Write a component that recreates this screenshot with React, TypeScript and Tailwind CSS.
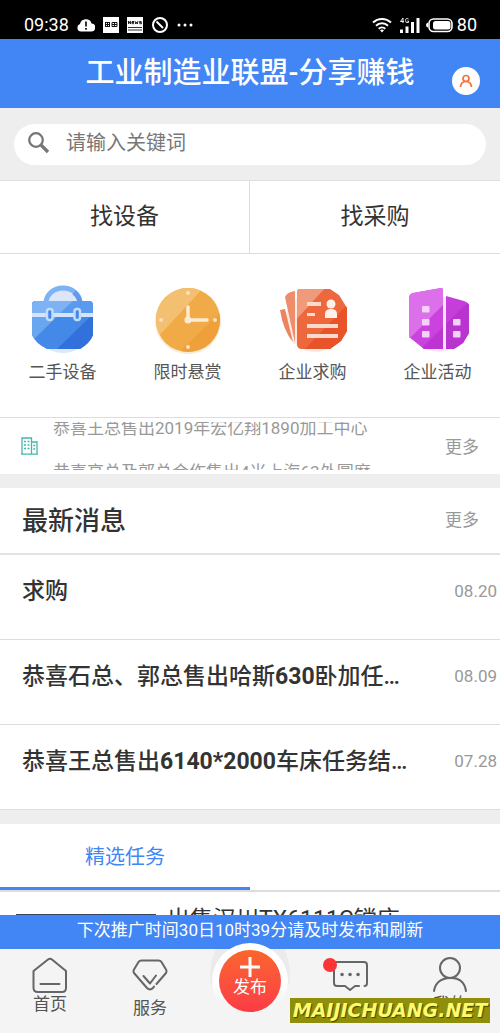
import type { ReactNode } from "react";

const news: { title: ReactNode; date: string }[] = [
  { title: "求购", date: "08.20" },
  { title: <>恭喜石总、郭总售出哈斯<b>630</b>卧加任务结束</>, date: "08.09" },
  { title: <>恭喜王总售出<b>6140*2000</b>车床任务结束了</>, date: "07.28" },
];

function StatusBar() {
  return (
    <div className="flex h-[39px] shrink-0 items-end justify-between bg-black pr-[23px] pb-[3px] pl-6 text-white">
      <div className="flex items-center gap-2">
        <span className="text-[18px] leading-[22px]">09:38</span>
        <svg width="18" height="14" viewBox="0 0 18 14">
          <path d="M4 13.500a3.800 3.800 0 0 1-1-7.400A6 6 0 0 1 14.600 5.500 4 4 0 0 1 14 13.500z" fill="#fff" />
          <path d="M9 3.500v5M9 10v1.700" stroke="#000" strokeWidth="1.600" />
        </svg>
        <svg width="16" height="16" viewBox="0 0 16 16">
          <path d="M0 0h16v16H0z" fill="#fff" />
          <path d="M2 5.500h5M2.500 5v5M2 9.500h5M6.500 5v5M4.500 5v5M2 7.500h5M9 5.500h5v4H9zM9 7.500h5M11.500 5v5" fill="none" stroke="#111" />
        </svg>
        <svg width="16" height="16" viewBox="0 0 16 16">
          <path d="M0 0h16v16H0z" fill="#fff" />
          <path d="M1.500 7V4l2 3V4M7 4.500H5v2.200h2M5 5.500h2M8 4l.7 3 .8-2 .8 2 .7-3M14.500 4.500h-2v1h2v1.200h-2.200" fill="none" stroke="#111" strokeWidth=".9" />
          <path d="M1 10.500h14M1 13h14" stroke="#333" />
        </svg>
        <svg width="18" height="18" viewBox="0 0 18 18" fill="none" stroke="#fff" strokeWidth="2">
          <circle cx="9" cy="9" r="7" />
          <path d="m5.500 5.500 6.500 6.500" />
        </svg>
        <svg width="16" height="16" viewBox="0 0 16 16" fill="#fff">
          <circle cx="2" cy="8" r="1.500" /><circle cx="8" cy="8" r="1.500" /><circle cx="14" cy="8" r="1.500" />
        </svg>
      </div>
      <div className="flex items-center">
        <svg className="mr-2" width="20" height="16" viewBox="0 0 20 16" fill="none" stroke="#fff" strokeWidth="2">
          <path d="M1 5.500a13 13 0 0 1 18 0M4 8.700a8.500 8.500 0 0 1 12 0M6.700 11.700a4.800 4.800 0 0 1 6.600 0" />
          <path d="m10 15.500-2-2.200q2-1.500 4 0z" fill="#fff" stroke="none" />
        </svg>
        <svg className="mr-[6px]" width="20" height="16" viewBox="0 0 20 16">
          <path d="M0 12.500h3V16H0zM5.500 9.500h3V16h-3zM11 5h3v11h-3zM16.500 1h3v15h-3z" fill="#fff" />
          <path d="M3 6V1L.5 4.500H4M8.500 2Q5.500.5 5.500 3.500T8.500 5.500V4H7.300" fill="none" stroke="#fff" strokeWidth=".9" />
        </svg>
        <svg className="mr-1" width="27" height="16" viewBox="0 0 27 16">
          <rect x="3" y="2" width="23" height="12.500" rx="4.500" fill="none" stroke="#fff" strokeWidth="1.600" />
          <rect x="7" y="4" width="17.500" height="8.500" rx="2.500" fill="#fff" />
          <path d="M2 5.500v5Q0 10 0 8t2-2.500" fill="#fff" />
        </svg>
        <span className="text-[18px] leading-[22px]">80</span>
      </div>
    </div>
  );
}

function Briefcase() {
  return (
    <svg width="72" height="72" viewBox="0 0 72 72">
      <defs>
        <clipPath id="bag"><path d="M5 20q0-4 4-4h53q4 0 4 4v30q-3 8-13 14H20Q9 59 5 50z" /></clipPath>
      </defs>
      <circle cx="36" cy="38" r="30" fill="#dce8fb" />
      <path d="M19 18a17 15 0 0 1 34 0" fill="#dce6f8" stroke="#7db2f4" strokeWidth="5" />
      <path d="M47 7.500A17 15 0 0 1 53 18" stroke="#6199ee" strokeWidth="5" fill="none" />
      <g clipPath="url(#bag)">
        <path d="M4 16h63v50H4z" fill="#4489e8" />
        <path d="M4 16h42L4 57z" fill="#69a6f0" />
        <path d="M67 28v38H28z" fill="#3270dc" />
        <path d="M4 16h63v12H4z" fill="#599aee" /><path d="M4 16h42L33 28H4z" fill="#7db2f4" />
        <path d="M4 28h63v4H4z" fill="#d4e5fb" />
      </g>
      <rect x="20" y="24" width="5.500" height="11" rx="2.500" fill="#4187e8" stroke="#c3dcfa" strokeWidth="2.500" />
      <rect x="47.500" y="24" width="5.500" height="11" rx="2.500" fill="#4187e8" stroke="#c3dcfa" strokeWidth="2.500" />
    </svg>
  );
}

function Clock() {
  return (
    <svg width="72" height="72" viewBox="0 0 72 72">
      <defs><clipPath id="dial"><circle cx="36" cy="35" r="32" /></clipPath></defs>
      <circle cx="36" cy="36" r="33" fill="#fbe9d0" />
      <g clipPath="url(#dial)">
        <path d="M0 0h72v72H0z" fill="#f0ab48" />
        <path d="M0 0h54L4 54H0z" fill="#f3bf70" />
        <path d="M72 24v48H22z" fill="#efa03b" />
      </g>
      <path d="M36 22v13h19" stroke="#fcebd2" strokeWidth="3.500" strokeLinecap="round" fill="none" />
      <circle cx="36" cy="35" r="3.500" fill="#fcebd2" />
      <g fill="#fae2bd"><circle cx="36" cy="8" r="2" /><circle cx="63" cy="35" r="2" /><circle cx="36" cy="62" r="2" /><circle cx="9" cy="35" r="2" /></g>
    </svg>
  );
}

function Cards() {
  return (
    <svg width="72" height="72" viewBox="0 0 72 72">
      <defs><clipPath id="card"><path d="M22 4h31l9 6 8 13v23l-6 10-11 8H25q-5 0-5-5V9q0-5 2-5" /></clipPath></defs>
      <circle cx="38" cy="37" r="30" fill="#fdeae3" />
      <path d="M18 6v52L8 12q2-5 10-6" fill="#ee8c6b" />
      <path d="m3 25 5-1 8 33Q6 45 3 25" fill="#ed8460" />
      <g clipPath="url(#card)">
        <path d="M18 2h54v64H18z" fill="#ed683d" />
        <path d="M18 2h31L18 36z" fill="#f09a7c" />
        <path d="M72 18v48H26z" fill="#e95329" />
      </g>
      <g fill="#fbd9cc">
        <path d="M30 17h14v4H30zM30 28h8v3h-8zM30 39h31v4H30zM30 49h31v4H30z" />
        <circle cx="54" cy="19" r="4.500" fill="#fff0ea" /><path d="M48 33v-4q0-5 6-5t6 5v4z" fill="#fff0ea" />
      </g>
    </svg>
  );
}

function Buildings() {
  return (
    <svg width="72" height="72" viewBox="0 0 72 72">
      <defs>
        <clipPath id="tower"><path d="M7 13q0-4 4-5L39 3q2 0 2 2v59H22L7 52z" /></clipPath>
        <clipPath id="annex"><path d="m44 11 18 5q5 2 5 5v27l-6 10-9 6h-8z" /></clipPath>
      </defs>
      <circle cx="37" cy="39" r="28" fill="#f9e6fc" />
      <g clipPath="url(#tower)">
        <path d="M6 2h36v62H6z" fill="#ca43de" />
        <path d="M6 2h36v17L6 55z" fill="#dc70ea" />
        <path d="M42 41v24H18z" fill="#bd34d2" />
      </g>
      <g clipPath="url(#annex)">
        <path d="M43 10h25v56H43z" fill="#c53ed9" /><path d="M68 15v50H43V40z" fill="#b933ce" />
      </g>
      <g fill="#f4d2f8">
        <rect x="20" y="21" width="7.500" height="6.500" rx="1" /><rect x="20" y="34" width="7.500" height="6.500" rx="1" /><rect x="20" y="46" width="7.500" height="6.500" rx="1" />
        <rect x="51" y="34" width="7.500" height="6.500" rx="1" /><rect x="51" y="46" width="7.500" height="6.500" rx="1" />
      </g>
    </svg>
  );
}

const shortcuts = [
  { label: "二手设备", icon: <Briefcase /> },
  { label: "限时悬赏", icon: <Clock /> },
  { label: "企业求购", icon: <Cards /> },
  { label: "企业活动", icon: <Buildings /> },
];

export default function App() {
  return (
    <div className="flex h-screen flex-col overflow-hidden bg-white font-[Roboto,'Noto_Sans_CJK_SC',sans-serif] text-[#333]">
      <StatusBar />
      <header className="relative flex h-[69px] shrink-0 items-center justify-center bg-[#4285f4] pb-[2px] text-white">
        <h1 className="text-[29px] leading-10 font-medium">工业制造业联盟-分享赚钱</h1>
        <button aria-label="个人中心" className="absolute right-5 bottom-[13px] flex size-7 items-center justify-center rounded-full bg-white">
          <svg width="14" height="14" viewBox="0 0 14 14" fill="none" stroke="#f2733b" strokeWidth="1.700">
            <circle cx="7" cy="4.500" r="3" /><path d="M1.500 13q.5-5.500 5.500-5.500t5.500 5.500" />
          </svg>
        </button>
      </header>
      <main className="min-h-0 flex-1 overflow-hidden">
        <div className="border-b border-[#ddd] bg-[#eee] px-[14px] pt-4 pb-[15px]">
          <label className="flex h-[41px] items-center rounded-full bg-white pl-[13px]">
            <svg className="mr-4 mb-1 shrink-0" width="23" height="23" viewBox="0 0 23 23" fill="none" stroke="#777">
              <circle cx="9" cy="9" r="6.800" strokeWidth="2.300" /><path d="m14 14 7 7" strokeWidth="3.300" />
            </svg>
            <input type="text" aria-label="搜索" placeholder="请输入关键词" className="mb-1 min-w-0 flex-1 bg-transparent text-[20px] leading-7 outline-none placeholder:text-[#777]" />
          </label>
        </div>
        <div className="grid grid-cols-2 border-b border-[#ddd] text-[23px] leading-[34px]">
          <button className="border-r border-[#ddd] pt-[19px] pb-[19px]">找设备</button>
          <button className="pt-[19px] pb-[19px]">找采购</button>
        </div>
        <div className="grid h-[164px] grid-cols-4 border-b border-[#ddd] pt-[31px]">
          {shortcuts.map((s) => (
            <a key={s.label} href="#" className="flex flex-col items-center text-[17px] leading-6 text-[#555]">
              {s.icon}
              <span className="mt-[3px]">{s.label}</span>
            </a>
          ))}
        </div>
        <div className="flex h-[56px] items-center pr-[21px] pl-5 text-[17px] text-[#999]">
          <svg className="mr-[14px] shrink-0" width="19" height="18" viewBox="0 0 19 18" fill="none" stroke="#43b9ab" strokeWidth="1.300">
            <path d="M1 17.200h17M2 17V1h9.500v16M11.500 5H17v12" /><path d="M4 4.500h2m1.500 0h2M4 8h2m1.500 0h2M4 11.500h2m1.500 0h2M13.200 8.500h2M13.200 12h2" strokeWidth="1.700" />
          </svg>
          <div className="flex h-[48px] min-w-0 flex-1 flex-col gap-5 overflow-hidden leading-[24px] whitespace-nowrap">
            <p className="-mt-[6px]">恭喜王总售出2019年宏亿翔1890加工中心</p>
            <p>恭喜高总及郭总合作售出4米上海63外圆磨</p>
          </div>
          <a href="#" className="pt-1">更多</a>
        </div>
        <section className="border-y-[14px] border-[#eee]">
          <div className="flex h-[67px] items-center justify-between border-b-2 border-[#e3e3e3] pr-[21px] pl-[22px]">
            <h2 className="text-[26px] leading-9 font-medium">最新消息</h2>
            <a href="#" className="text-[17px] text-[#999]">更多</a>
          </div>
          <ul>
            {news.map((n) => (
              <li key={n.date} className="border-b border-[#ddd]">
                <a href="#" className="flex h-[84px] items-center justify-between pr-[3px] pb-[10px] pl-[22px]">
                  <span className="w-[82%] truncate text-[23px] leading-[34px] font-medium">{n.title}</span>
                  <time className="text-[17px] text-[#999]">{n.date}</time>
                </a>
              </li>
            ))}
          </ul>
        </section>
        <div className="grid grid-cols-2 border-b-2 border-[#ddd]">
          <button className="border-b-3 border-[#4285f4] pt-[18px] pb-[15px] text-[20px] leading-[30px] text-[#4285f4]">精选任务</button>
        </div>
        <article className="flex h-[120px] gap-[11px] px-4 pt-[13px]">
          <div className="mt-[9px] h-20 w-[140px] bg-[#39455c]" />
          <h3 className="text-[23px] leading-[30px]">出售汉川TX6111C镗床</h3>
        </article>
      </main>
      <div className="h-[34px] shrink-0 bg-[#4285f4] text-center text-[17px] leading-[31px] text-white">
        下次推广时间30日10时39分请及时发布和刷新
      </div>
      <nav className="relative grid h-[84px] shrink-0 grid-cols-5 bg-[#f4f4f4] text-[17px] leading-6 text-[#555]">
        <a href="#" className="flex flex-col items-center pt-2">
          <svg width="36" height="36" viewBox="0 0 36 36" fill="none" stroke="#666" strokeWidth="2" strokeLinejoin="round" strokeLinecap="round">
            <path d="M1.500 14 16 2.500q2-1.500 4 0L34 14v17q0 4-4 4H6q-4.500 0-4.500-4zM8.500 27h19" />
          </svg>
          <span className="-mt-px">首页</span>
        </a>
        <a href="#" className="flex flex-col items-center pt-[10px]">
          <svg width="36" height="36" viewBox="0 0 36 36" fill="none" stroke="#666" strokeWidth="2" strokeLinejoin="round" strokeLinecap="round">
            <path d="M24.500 25 34 14q1-2 0-3.500L29.500 3q-1-1.500-3-1.500h-17Q7.500 1.500 6.500 3L2 10.500Q1 12 2 14l13 15q3 3 6 0l1-1.500M11.500 17l6.500 7.500 6-8" />
          </svg>
          <span className="mt-px">服务</span>
        </a>
        <a href="#" className="relative -mt-[6px] flex flex-col items-center text-white">
          <svg className="absolute top-[6px]" width="84" height="36" viewBox="0 0 84 36"><path d="M8 0h68q8 16 5 36H3Q0 16 8 0" fill="#ebebeb" /></svg>
          <span className="relative flex size-[76px] items-center justify-center rounded-full bg-[#f4f4f4] bg-linear-to-b from-white from-50% to-[#f4f4f4] to-80%">
            <span className="flex size-[62px] flex-col items-center rounded-full bg-linear-to-b from-[#fb652c] to-[#fb3a47] pt-[7px]">
              <svg className="-mb-[2px] shrink-0" width="20" height="20" viewBox="0 0 20 20" stroke="#fff" strokeWidth="3"><path d="M10 0v20M0 10h20" /></svg>
              <span>发布</span>
            </span>
          </span>
        </a>
        <a href="#" aria-label="消息" className="relative flex flex-col items-center pt-[11px]">
          <svg width="42" height="36" viewBox="0 0 42 36" fill="none" stroke="#666" strokeWidth="2" strokeLinejoin="round" strokeLinecap="round">
            <path d="M35.500 26q2.500 0 2.500-3V5q0-3-3-3H8Q5 2 5 5v18q0 3 3 3h8l5 4 5-4h4" />
            <path d="M13 14.500h.1M21 14.500h.1M29 14.500h.1" strokeWidth="3.500" />
          </svg>
          <i className="absolute top-[9px] left-[23px] size-[14px] rounded-full bg-[#fb3535]" />
        </a>
        <a href="#" className="flex flex-col items-center pt-2">
          <svg width="36" height="36" viewBox="0 0 36 36" fill="none" stroke="#666" strokeWidth="2" strokeLinecap="round">
            <circle cx="18" cy="11" r="10" /><path d="M2 34q2-12.500 16-13t16 13" />
          </svg>
          <span className="-mt-px">我的</span>
        </a>
        <div className="absolute right-[10px] bottom-[10px] flex h-[25px] w-[200px] items-center justify-center bg-[#8f8f0c] pb-[2px] font-['DejaVu_Sans',sans-serif] text-[19px] font-bold whitespace-nowrap text-[#fbfb6c] italic [text-shadow:1px_1px_1px_#444400]">
          MAIJICHUANG.NET
        </div>
      </nav>
    </div>
  );
}
